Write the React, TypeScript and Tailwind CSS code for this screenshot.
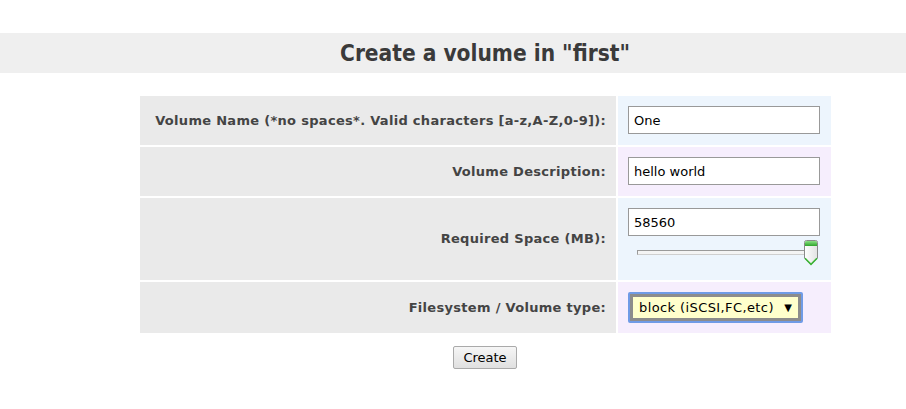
import React from 'react';

const labelCell =
    'bg-[#eaeaea] flex items-center justify-end pr-[10px] text-[13px] font-bold text-[#444] tracking-[0.3px] whitespace-nowrap';

const textInput =
    'w-[192px] h-[28px] border border-[#999] bg-white px-[5px] text-[13px] text-black outline-none';

export default function App() {
    return (
        <div className="w-[906px] h-[409px] bg-white pt-[33px] font-['DejaVu_Sans',sans-serif]">
            {/* Header band */}
            <div className="h-[40px] bg-[#efefef] flex items-center justify-center pl-[64px] pt-[2px]">
                <h1 className="text-[22.5px] font-bold text-[#3a3a3a] font-['DejaVu_Sans_Condensed','DejaVu_Sans',sans-serif]">
                    Create a volume in "first"
                </h1>
            </div>

            {/* Form table */}
            <div className="mt-[23px] ml-[140px] grid grid-cols-[476px_213px] gap-[2px]">
                <div className={labelCell}>Volume Name (*no spaces*. Valid characters [a-z,A-Z,0-9]):</div>
                <div className="bg-[#edf5fd] pt-[10px] pb-[11px] pl-[10px]">
                    <input defaultValue="One" className={textInput} />
                </div>

                <div className={labelCell}>Volume Description:</div>
                <div className="bg-[#f6eefd] pt-[10px] pb-[11px] pl-[10px]">
                    <input defaultValue="hello world" className={textInput} />
                </div>

                <div className={labelCell}>Required Space (MB):</div>
                <div className="bg-[#edf5fd] pt-[10px] pb-[16px] pl-[10px]">
                    <input defaultValue="58560" className={textInput} />
                    {/* Slider */}
                    <div className="relative mt-[14px] ml-[9px] w-[175px] h-[14px]">
                        <div className="absolute left-0 top-[0px] w-[175px] h-[5px] border border-[#9a9a9a] border-b-[#cfcfcf] border-r-[#cfcfcf] bg-[#f4f4f4]" />
                        <svg
                            className="absolute left-[166px] top-[-10px]"
                            width="16"
                            height="26"
                            viewBox="0 0 16 26"
                        >
                            <defs>
                                <linearGradient id="thumbBody" x1="0" y1="0" x2="1" y2="0">
                                    <stop offset="0" stopColor="#ffffff" />
                                    <stop offset="1" stopColor="#e2e2e2" />
                                </linearGradient>
                                <linearGradient id="thumbTop" x1="0" y1="0" x2="0" y2="1">
                                    <stop offset="0" stopColor="#8be085" />
                                    <stop offset="1" stopColor="#2fa52a" />
                                </linearGradient>
                            </defs>
                            <path
                                d="M1.5 2.5 Q1.5 0.5 3.5 0.5 H12.5 Q14.5 0.5 14.5 2.5 V18 L8 24.5 L1.5 18 Z"
                                fill="url(#thumbBody)"
                                stroke="#8a8a8a"
                            />
                            <path
                                d="M2 2.5 Q2 1 3.5 1 H12.5 Q14 1 14 2.5 V6 H2 Z"
                                fill="url(#thumbTop)"
                            />
                            <path d="M2 18.3 L8 24.3 L14 18.3" fill="none" stroke="#3cb536" strokeWidth="1.6" />
                        </svg>
                    </div>
                </div>

                <div className={labelCell}>Filesystem / Volume type:</div>
                <div className="bg-[#f6eefd] py-[10px] pl-[10px]">
                    <div className="w-[175px] h-[31px] rounded-[2px] border-2 border-[#6f9be6] flex">
                        <div className="flex-1 border-[3px] border-[#8c8c8c] bg-[#ffffcc] flex items-center pl-[6px] pr-[6px] text-[13px] text-black">
                            <span className="flex-1 tracking-[0.4px]">block (iSCSI,FC,etc)</span>
                            <span className="text-[10px]">▼</span>
                        </div>
                    </div>
                </div>
            </div>

            {/* Submit */}
            <div className="mt-[13px] flex justify-center pl-[64px]">
                <button className="h-[23px] px-[9px] border border-[#aaa] rounded-[2px] bg-gradient-to-b from-[#f6f6f6] to-[#e0e0e0] text-[13px] text-black">
                    Create
                </button>
            </div>
        </div>
    );
}
